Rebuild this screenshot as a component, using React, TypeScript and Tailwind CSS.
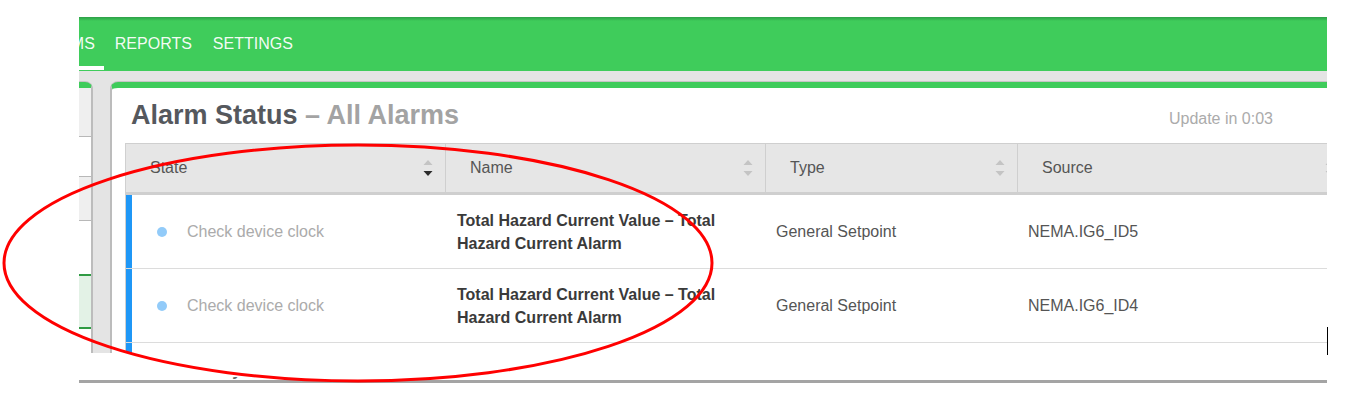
import React from 'react';

const green = 'bg-[#3fcc5b]';

function SortIcon({ down = false }: { down?: boolean }) {
  return (
    <svg width="10" height="18" viewBox="0 0 10 18" className="flex-none">
      <polygon points="0.5,6 5,1 9.5,6" fill="#c4c4c4" />
      <polygon points="0.5,12 9.5,12 5,17" fill={down ? '#2b2b2b' : '#c4c4c4'} />
    </svg>
  );
}

function HeaderCell({ label, width, down }: { label: string; width: string; down?: boolean }) {
  return (
    <div className={`${width} flex-none flex items-center justify-between pl-[24px] pr-[12px] border-r border-[#cfcfcf]`}>
      <span>{label}</span>
      <SortIcon down={down} />
    </div>
  );
}

function AlarmRow({ source }: { source: string }) {
  return (
    <div className="flex h-[74px] border-b border-[#dcdcdc] text-[16px]">
      <div className="w-[320px] flex-none flex items-center border-l-[6px] border-[#1f97f6] pl-[25px]">
        <span className="w-[10px] h-[10px] rounded-full bg-[#92cbf9] mr-[20px]" />
        <span className="text-[#ababab]">Check device clock</span>
      </div>
      <div className="w-[320px] flex-none flex items-center pl-[11px] pr-[12px] font-bold text-[#3a3a3a] leading-[23px]">
        Total Hazard Current Value – Total Hazard Current Alarm
      </div>
      <div className="w-[252px] flex-none flex items-center pl-[10px] text-[#555]">General Setpoint</div>
      <div className="w-[320px] flex-none flex items-center pl-[10px] text-[#555]">{source}</div>
    </div>
  );
}

export default function App() {
  return (
    <div className="relative w-[1359px] h-[394px] bg-white overflow-hidden font-['Liberation_Sans',Arial,sans-serif]">
      <div className="ml-[79px] pt-[17px]">
        <div className="w-[1248px] h-[336px] overflow-hidden flex flex-col bg-[#e4e4e4]">
          {/* top nav */}
          <div className={`h-[54px] flex-none flex items-stretch ${green} bg-[linear-gradient(#2e9f48_0px,#3fcc5b_4px)] text-[16px] text-white/95`}>
            <div className="ml-[-60px] pl-[10px] pr-[9px] pt-[5px] mb-[1px] flex items-center border-b-[4px] border-white">ALARMS</div>
            <div className="ml-[11px] flex items-center">REPORTS</div>
            <div className="ml-[21px] flex items-center">SETTINGS</div>
          </div>

          <div className="flex-1 flex pt-[11px]">
            {/* left panel */}
            <div className="w-[14px] flex-none flex flex-col bg-white border-t-[6px] border-t-[#3fcc5b] border-r-2 border-r-[#bcbcbc] rounded-tr-[8px] shadow-[0_-1px_0_#c6c6c6]">
              <div className="h-[49px] bg-[#efefef] border-b border-[#b8b8b8]" />
              <div className="h-[39px]" />
              <div className="h-[45px] bg-[#efefef] border-y border-[#b8b8b8]" />
              <div className="h-[53px]" />
              <div className="h-[55px] bg-[#e3f2e6] border-y-2 border-[#2f9b43]" />
            </div>

            {/* main panel */}
            <div className="ml-[17px] w-[1230px] flex-none bg-white border-t-[6px] border-t-[#3fcc5b] border-l-2 border-l-[#bcbcbc] rounded-tl-[8px] shadow-[0_-1px_0_#c6c6c6]">
              <div className="flex items-baseline justify-between pl-[19px] pr-[67px] pt-[12px]">
                <h1 className="text-[27px] leading-[31px] font-bold text-[#55585d]">
                  Alarm Status <span className="text-[#a3a3a3]">– All Alarms</span>
                </h1>
                <span className="text-[16px] text-[#ababab]">Update in 0:03</span>
              </div>

              <div className="ml-[13px] mt-[12px] border-l border-[#d0d0d0]">
                <div className="flex h-[52px] bg-[#e6e6e6] border-t border-b-[3px] border-[#cfcfcf] text-[16px] text-[#555]">
                  <HeaderCell label="State" width="w-[320px]" down />
                  <HeaderCell label="Name" width="w-[320px]" />
                  <HeaderCell label="Type" width="w-[252px]" />
                  <HeaderCell label="Source" width="w-[330px]" />
                </div>
                <AlarmRow source="NEMA.IG6_ID5" />
                <AlarmRow source="NEMA.IG6_ID4" />
                <div className="h-[20px] border-l-[6px] border-[#1f97f6]" />
              </div>
            </div>
          </div>
        </div>

        {/* next section, cut off */}
        <div className="w-[1248px] mt-[24px]">
          <div className="h-[3px] overflow-hidden">
            <div className="mt-[-15px] leading-[18px] text-[16px] font-bold text-[#666]">Recent Alarm History</div>
          </div>
          <div className="h-[3px] bg-[#a4a4a4]" />
        </div>
      </div>

      <div className="absolute left-[1327px] top-[327px] w-[1px] h-[28px] bg-black" />

      <svg className="absolute left-0 top-0 pointer-events-none" width="1359" height="394" viewBox="0 0 1359 394">
        <ellipse cx="358" cy="263" rx="354" ry="118" fill="none" stroke="#ff0000" strokeWidth="3" />
      </svg>
    </div>
  );
}
